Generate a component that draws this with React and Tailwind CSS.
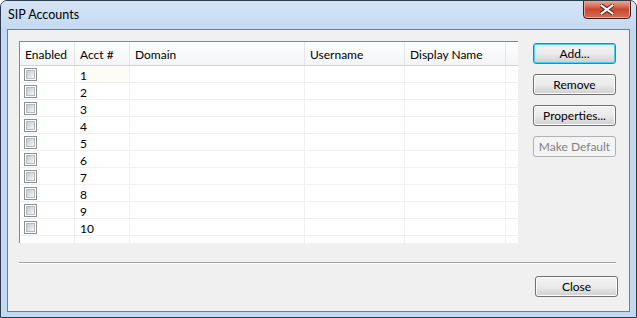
const COLUMNS = [
  { title: "Enabled", w: "w-[55px]" },
  { title: "Acct #", w: "w-[55px]" },
  { title: "Domain", w: "w-[175px]" },
  { title: "Username", w: "w-[100px]" },
  { title: "Display Name", w: "w-[101px]" },
];

const ROWS = [1, 2, 3, 4, 5, 6, 7, 8, 9, 10];

function Checkbox() {
  return (
    <div className="w-[13px] h-[13px] border border-[#8e8f8f] bg-white p-px">
      <div className="w-full h-full bg-gradient-to-br from-[#c5c9cf] to-[#f7f7f7] border border-[#b5b9be]" />
    </div>
  );
}

function Button({ children, variant }) {
  if (variant === "disabled") {
    return (
      <div className="w-[83px] h-[21px] rounded-[3px] border border-[#adb2b5] bg-[#f4f4f4] flex items-center justify-center text-[#838383]">
        {children}
      </div>
    );
  }
  const border =
    variant === "default"
      ? "border-[#3c7fb1] shadow-[inset_0_0_0_1px_#48d0f8]"
      : "border-[#707070] shadow-[inset_0_0_0_1px_#fcfcfc]";
  return (
    <div
      className={`w-[83px] h-[21px] rounded-[3px] border ${border} bg-gradient-to-b from-[#f2f2f2] via-[#ebebeb] to-[#cfcfcf] flex items-center justify-center text-black`}
    >
      {children}
    </div>
  );
}

export default function App() {
  return (
    <div
      className="w-[637px] h-[318px] bg-[#c3d9f2] border border-[#2d3b4e] rounded-t-[7px] flex flex-col text-[12px] text-black overflow-hidden"
      style={{ fontFamily: '"Segoe UI", Lato, "Noto Sans", sans-serif' }}
    >
      {/* title bar */}
      <div className="h-[28px] flex items-start justify-between bg-gradient-to-b from-[#d6e5f5] to-[#c3d9f2]">
        <div className="pl-[7px] pt-[5px] text-[12.5px] leading-[18px]">SIP Accounts</div>
        <div className="mr-[5px] mt-[-1px] w-[48px] h-[19px] rounded-b-[4px] border border-[#3b1e1e] bg-gradient-to-b from-[#e7a897] via-[#c9462b] to-[#d36f57] flex items-center justify-center shadow-[inset_0_0_0_1px_#eaa48f]">
          <svg width="14" height="11" viewBox="0 0 14 11">
            <path
              d="M1.5 1.5 L12.5 9.5 M12.5 1.5 L1.5 9.5"
              stroke="#4a2a28"
              strokeWidth="4"
              strokeLinecap="square"
            />
            <path
              d="M1.5 1.5 L12.5 9.5 M12.5 1.5 L1.5 9.5"
              stroke="#ffffff"
              strokeWidth="2"
              strokeLinecap="square"
            />
          </svg>
        </div>
      </div>

      {/* client area */}
      <div className="mx-[6px] h-[283px] border border-[#6f7f92] bg-[#f0f0f0] flex flex-col">
        <div className="flex pt-[11px] pl-[11px]">
          {/* list view */}
          <div className="w-[499px] h-[202px] bg-white border-l border-t border-[#828790] flex flex-col">
            <div className="flex h-[24px] border-b border-[#d5d5d5] bg-gradient-to-b from-white to-[#f3f4f6]">
              {COLUMNS.map((c) => (
                <div
                  key={c.title}
                  className={`${c.w} shrink-0 border-r border-[#e3e5e8] pl-[5px] pt-[2px] flex items-center`}
                >
                  {c.title}
                </div>
              ))}
              <div className="w-[11px] shrink-0" />
            </div>
            {ROWS.map((n) => (
              <div key={n} className="flex h-[17px] border-b border-[#f0f0f0]">
                <div className="w-[55px] shrink-0 border-r border-[#f0f0f0] pl-[4px] pt-[1px] flex items-center">
                  <Checkbox />
                </div>
                <div
                  className={`w-[55px] shrink-0 border-r border-[#f0f0f0] pl-[5px] pt-[3px] flex items-center ${
                    n === 1 ? "bg-[#fdfcf6]" : ""
                  }`}
                >
                  {n}
                </div>
                <div className="w-[175px] shrink-0 border-r border-[#f0f0f0]" />
                <div className="w-[100px] shrink-0 border-r border-[#f0f0f0]" />
                <div className="w-[101px] shrink-0 border-r border-[#f0f0f0]" />
              </div>
            ))}
            <div className="flex flex-1">
              <div className="w-[55px] shrink-0 border-r border-[#f0f0f0]" />
              <div className="w-[55px] shrink-0 border-r border-[#f0f0f0]" />
              <div className="w-[175px] shrink-0 border-r border-[#f0f0f0]" />
              <div className="w-[100px] shrink-0 border-r border-[#f0f0f0]" />
              <div className="w-[101px] shrink-0 border-r border-[#f0f0f0]" />
            </div>
          </div>

          {/* buttons */}
          <div className="ml-[15px] pt-[2px] flex flex-col gap-[10px]">
            <Button variant="default">Add...</Button>
            <Button>Remove</Button>
            <Button>Properties...</Button>
            <Button variant="disabled">Make Default</Button>
          </div>
        </div>

        <div className="ml-[11px] mt-[19px] w-[597px] h-[2px] border-t border-[#a0a0a0] border-b border-b-white" />

        <div className="flex justify-end pr-[11px] mt-[12px]">
          <Button>Close</Button>
        </div>
      </div>
    </div>
  );
}
